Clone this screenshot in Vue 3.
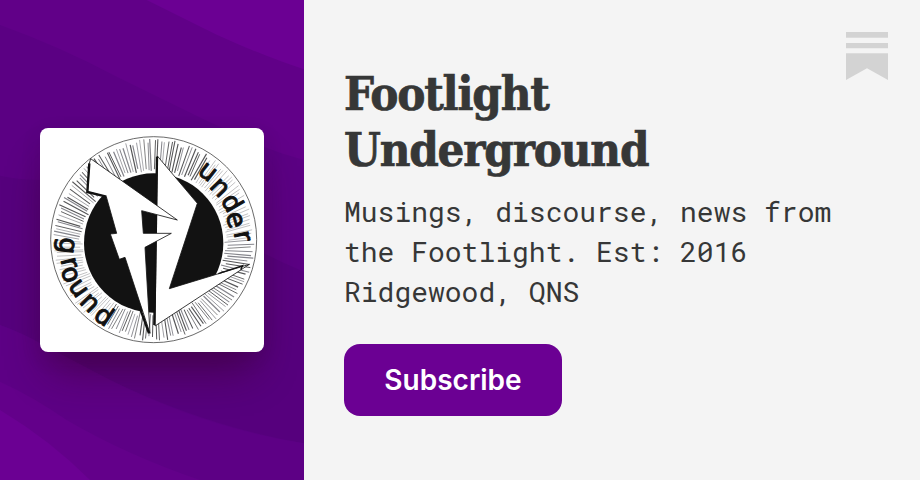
<template>
  <div class="card">
    <aside class="cover">
      <svg class="waves" viewBox="0 0 912 1440" preserveAspectRatio="none" aria-hidden="true">
        <rect width="912" height="1440" fill="#5b0083" />
        <path d="M0 0H912V480Q850 464 792 441L620 362L350 230Q180 140 0 75Z" fill="#610088" />
        <path d="M440 0L650 104Q790 168 912 208V0Z" fill="#6b0093" />
        <path d="M0 527Q60 540 120 540Q460 590 792 760Q850 790 912 815V1330Q620 1280 330 1140L130 1035Q70 1000 0 975Z" fill="#56007d" />
        <path d="M0 975Q70 1000 130 1035L330 1140Q620 1285 912 1330V1440H0Z" fill="#5d0085" />
        <path d="M0 1145Q100 1190 200 1260Q380 1365 600 1440H0Z" fill="#63008a" />
        <path d="M0 1230Q150 1320 270 1440H0Z" fill="#6b0093" />
      </svg>
      <div class="logo">
        <svg viewBox="120 384 672 672" role="img" aria-label="Footlight Underground">
          <circle cx="461" cy="719" r="309" class="ring" />
          <line
            v-for="(ray, i) in rays"
            :key="i"
            :x1="ray.x1"
            :y1="ray.y1"
            :x2="ray.x2"
            :y2="ray.y2"
            :stroke-width="ray.width"
            :stroke="ray.color"
          />
          <circle cx="461" cy="729" r="209" fill="#121212" />
          <path d="M472 468L592 610L508 866L748 793L465 978Z" class="bolt" />
          <path d="M471 470L463 975" class="ink" />
          <path d="M655 821L728 797L722 809" class="ink thin" />
          <path
            d="M272 476L532 660L425 632L430 700H514L435 742L450 1000L375 772L358 778L331 702L350 700L319 590L263 575L268 490Z"
            class="bolt"
          />
          <path d="M268 490L262 576L319 590M420 925L447 1000" class="ink" />
          <text
            v-for="(l, i) in letters"
            :key="'l' + i"
            class="letter"
            :transform="`translate(${l.x} ${l.y}) rotate(${l.r})`"
            dy="21"
          >{{ l.c }}</text>
        </svg>
      </div>
    </aside>

    <main class="content">
      <div class="text">
        <h1>Footlight<br />Underground</h1>
        <p>Musings, discourse, news from<br />the Footlight. Est: 2016<br />Ridgewood, QNS</p>
        <button type="button">Subscribe</button>
      </div>
      <svg class="bookmark" viewBox="0 0 42 48" width="42" height="48" aria-hidden="true">
        <path d="M0 0H42V5.7H0ZM0 11H42V16.3H0ZM0 21.3H42V48L21 36.2L0 48Z" />
      </svg>
    </main>
  </div>
</template>

<script setup>
const letters = [
  { c: 'u', x: 622, y: 517, r: 38 },
  { c: 'n', x: 658, y: 564, r: 46 },
  { c: 'd', x: 691, y: 611, r: 60 },
  { c: 'e', x: 703, y: 660, r: 74 },
  { c: 'r', x: 725, y: 709, r: 78 },
  { c: 'g', x: 200, y: 737, r: 96 },
  { c: 'r', x: 206, y: 789, r: 76 },
  { c: 'o', x: 209, y: 824, r: 66 },
  { c: 'u', x: 234, y: 866, r: 54 },
  { c: 'n', x: 268, y: 910, r: 45 },
  { c: 'd', x: 309, y: 951, r: 34 }
]

// small repeatable noise so the rays look hand drawn
const noise = (n) => {
  const v = Math.sin(n * 127.1) * 43758.5453
  return v - Math.floor(v)
}

const rays = Array.from({ length: 176 }, (_, i) => {
  const a = ((i + noise(i) * 0.35) / 176) * Math.PI * 2
  const b = a + (noise(i + 400) - 0.5) * 0.02
  const inner = 212 + noise(i + 900) * 14
  const outer = 304 - noise(i + 1300) * 16
  // keep the rays faint behind the two words
  const deg = (a * 180) / Math.PI
  const behindText = (deg > 122 && deg < 182) || (deg > 304 && deg < 359)
  const color = noise(i + 31) > 0.45 ? '#555557' : '#85858c'
  return {
    x1: 461 + Math.cos(a) * inner,
    y1: 727 + Math.sin(a) * inner,
    x2: 461 + Math.cos(b) * outer,
    y2: 719 + Math.sin(b) * outer,
    width: behindText ? 1.8 : 2 + noise(i + 70) * 1.8,
    color: behindText ? '#98989c' : color
  }
})
</script>

<style>
body {
  margin: 0;
}
</style>

<style scoped>
.card {
  display: flex;
  width: 920px;
  height: 480px;
  overflow: hidden;
  background: #f4f4f4;
}

.cover {
  position: relative;
  display: flex;
  flex: 0 0 304px;
  align-items: center;
  justify-content: center;
  overflow: hidden;
}

.waves {
  position: absolute;
  inset: 0;
  width: 100%;
  height: 100%;
}

.logo {
  position: relative;
  width: 224px;
  height: 224px;
  border-radius: 8px;
  background: #fff;
  box-shadow: 0 28px 40px -10px rgba(50, 0, 20, 0.42), 0 6px 20px rgba(40, 0, 40, 0.12);
}

.logo svg {
  display: block;
  width: 100%;
  height: 100%;
}

.ring {
  fill: none;
  stroke: #444;
  stroke-width: 2.4;
}

.bolt {
  fill: #fff;
  stroke: #151515;
  stroke-width: 2.5;
}

.ink {
  fill: none;
  stroke: #111;
  stroke-width: 7;
}

.ink.thin {
  stroke-width: 4;
}

.letter {
  font-family: "DejaVu Sans", sans-serif;
  font-size: 78px;
  text-anchor: middle;
  fill: #111;
  stroke: #111;
  stroke-width: 3px;
  stroke-linejoin: round;
}

.content {
  display: flex;
  flex: 1;
  align-items: flex-start;
  justify-content: space-between;
  padding: 32px 32px 0 40px;
}

.text {
  padding-top: 34px;
  white-space: nowrap;
  color: #363737;
}

h1 {
  margin: 0;
  font-family: "Roboto Slab", "DejaVu Serif Condensed", "DejaVu Serif", serif;
  font-size: 47px;
  font-weight: 700;
  line-height: 56px;
  letter-spacing: -1.2px;
  -webkit-text-stroke: 0.7px #363737;
}

p {
  margin: 14px 0 32px;
  font-family: "Roboto Mono", "DejaVu Sans Mono", monospace;
  font-size: 28px;
  line-height: 40px;
}

button {
  display: block;
  width: 218px;
  height: 72px;
  padding: 0;
  border: 0;
  border-radius: 16px;
  background: #6b0093;
  color: #fff;
  font-family: Inter, sans-serif;
  font-size: 28px;
  font-weight: 600;
}

.bookmark {
  flex: none;
  fill: #d3d3d3;
}
</style>
